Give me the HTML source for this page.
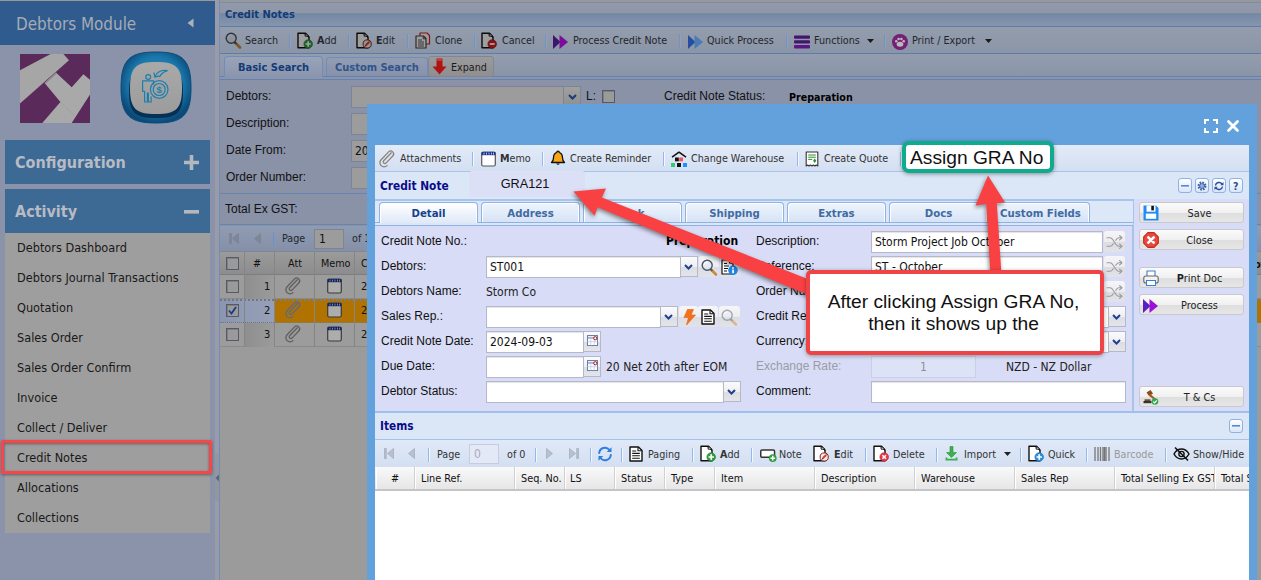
<!DOCTYPE html>
<html lang="en">
<head>
<meta charset="utf-8">
<title>Credit Notes - Assign GRA No</title>
<style>
*{box-sizing:border-box;margin:0;padding:0}
html,body{width:1261px;height:580px;overflow:hidden}
body{position:relative;background:#8b93aa;font-family:"DejaVu Sans Condensed","Liberation Sans",sans-serif;font-size:10.7px;color:#111}
.a{position:absolute}
.t{position:absolute;white-space:nowrap;line-height:14px}
.ar{font-family:"Liberation Sans",sans-serif;font-size:12px}
.b{font-weight:bold}
svg{position:absolute;overflow:visible}
/* ---------- background (masked) ---------- */
#side{left:0;top:0;width:215px;height:580px;background:#8b93aa}
#shead{left:0;top:1px;width:215px;height:44px;background:#2f5b8f}
#shead .t{left:16px;top:12px;font-size:16.9px;line-height:22px;color:#a7abb3}
.acc{left:5px;width:205px;height:44px;background:#3d6a95}
.acc .t{left:10px;top:12px;font-size:16px;line-height:22px;font-weight:bold;color:#b7bbc3}
#menu{left:5px;top:233px;width:205px;height:300px;background:#9e9e9e}
#menu .t{left:12px;font-size:12.6px;line-height:16px;color:#191919;font-family:"DejaVu Sans Condensed","Liberation Sans",sans-serif}
#split{left:215px;top:0;width:5px;height:580px;background:#999ba6}
#main{left:219px;top:0;width:1042px;height:580px;background:#8a92a8;border-left:1px solid #6f8db8}
.sep{position:absolute;width:1px;height:14px;background:#6f95c8;top:34px;box-shadow:1px 0 0 #949fb6}
.sep2{position:absolute;width:1px;height:14px;background:#93b8ee;box-shadow:1px 0 0 #f4f8fe}
.inp{position:absolute;background:#9c9c9c;border:1px solid #7d8494;height:22px}
/* ---------- dialog ---------- */
#dlg{left:367px;top:104px;width:890px;height:480px;background:#62a1dc}
#dbody{left:8px;top:41px;width:874px;height:440px;background:#dce6f6}
.dinp{position:absolute;background:#fff;border:1px solid #b5b8c8;height:22px;font-size:12px;line-height:21px;padding-left:3px;box-shadow:inset 0 1px 1px #e4e4e4}
.trg{position:absolute;width:17px;height:21px;border:1px solid #b5b8c8;border-left:0;background:linear-gradient(#fbfbfc 0,#efeff2 50%,#dcdde2 52%,#e4e5ea 100%)}
.tab{position:absolute;top:98px;height:20px;width:99px;border:1px solid #8db2e3;border-bottom:0;border-radius:4px 4px 0 0;background:linear-gradient(#eef4fd,#d6e3f6);box-shadow:inset 1px 1px 0 #fff,inset -1px 0 0 #fff;text-align:center;font-weight:bold;font-size:11.3px;line-height:22px;color:#416aa3}
.tab.on{background:linear-gradient(#ffffff,#dfe9f8);color:#15428b;height:21px}
.btn{position:absolute;left:764px;width:105px;height:21px;border:1px solid #c8c9cf;border-radius:3px;background:linear-gradient(#fbfbfb 0,#f0f0f0 50%,#dedede 51%,#e6e6e6 100%);text-align:center;font-size:10.8px;line-height:21px;color:#222;padding-left:16px}
.tool{position:absolute;width:14px;height:14px;border:1px solid #8db2e3;border-radius:3px;background:linear-gradient(#fff,#d9e5f7)}
.hd{position:absolute;top:0;height:23px;margin-left:1px;border-right:1px solid #d0d0d0;border-left:1px solid #fff;font-size:10.8px;line-height:24px;padding-left:5px;color:#111;overflow:hidden;white-space:nowrap}
</style>
</head>
<body>
<!-- ================= SIDEBAR ================= -->
<div class="a" id="side">
  <div class="a" style="left:0;top:0;width:215px;height:1px;background:#9b9793"></div>
  <div class="a" id="shead"><span class="t">Debtors Module</span>
    <svg style="left:187px;top:17px" width="7" height="10" viewBox="0 0 7 10"><path d="M6.5 0.5 L0.5 5 L6.5 9.5Z" fill="#aeb2ba"/></svg>
  </div>
  <!-- logo -->
  <svg style="left:20px;top:54px" width="70" height="69" viewBox="0 0 70 69">
    <rect width="70" height="69" fill="#5a2a5a"/>
    <path d="M0 16.300 L30.600 0 L43.400 0 L49 6.200 L0 49.400Z" fill="#a6a6a6"/>
    <path d="M24.600 29.100 L35.900 18.500 L51.700 33.300 L63.400 20.300 L70 25.800 L70 40.400 L51.700 69 L22.300 69 L40.400 47.900Z" fill="#a9a9a9"/>
    <path d="M24.600 29.100 L35.900 18.500 L36.800 19.400 L25.600 30Z" fill="#8d8d8d"/>
    <path d="M40.400 47.900 L55 62" stroke="#9b9b9b" stroke-width=".600" fill="none"/>
  </svg>
  <!-- module icon -->
  <svg style="left:120px;top:51px" width="72" height="73" viewBox="0 0 72 73">
    <defs>
      <radialGradient id="mg" cx="50%" cy="45%" r="55%"><stop offset="0" stop-color="#2e93c6"/><stop offset=".7" stop-color="#1a76aa"/><stop offset="1" stop-color="#0a4a78"/></radialGradient>
      <linearGradient id="mi" x1="0" y1="0" x2="0" y2="1"><stop offset="0" stop-color="#a9a9a9"/><stop offset="1" stop-color="#9c9c9c"/></linearGradient>
    </defs>
    <path d="M36 1 C62 1 71 8 71 37 C71 65 62 72 36 72 C10 72 1 65 1 37 C1 8 10 1 36 1Z" fill="url(#mg)" stroke="#0a4c7c" stroke-width="1"/>
    <path d="M36 15 C57 15 63 20 63 41 C63 62 57 67 36 67 C15 67 9 62 9 41 C9 20 15 15 36 15Z" fill="#052b4e" opacity=".9"/>
    <path d="M36 11 C56 11 62 16 62 37 C62 58 56 63 36 63 C16 63 10 58 10 37 C10 16 16 11 36 11Z" fill="url(#mi)"/>
    <g fill="none" stroke="#1c7fae" stroke-width="1.200" stroke-linejoin="round">
      <circle cx="28.200" cy="26" r="2.400"/>
      <path d="M33.600 33.500 v-3.700 h-11 v10.500 h2 v10.700 h2.800 v-9 h1 v9 h2.800 v-5.500"/>
      <circle cx="39.200" cy="38.500" r="8.800"/>
      <circle cx="39.200" cy="38.500" r="6"/>
      <path d="M47.400 19.600 q-9-1.500-12.500 6 M34 21.500 l0.800 4.600 l4.400-1.200"/>
      <path d="M47.400 19.600 q-6 2-8 6.500"/>
    </g>
    <text x="39.200" y="42" font-size="9.500" font-family="Liberation Sans, sans-serif" font-weight="bold" text-anchor="middle" fill="#1c7fae">$</text>
  </svg>
  <div class="a acc" style="top:140px"><span class="t">Configuration</span>
    <svg style="left:179px;top:15px" width="15" height="15" viewBox="0 0 15 15"><path d="M5.700 0h3.600v5.700h5.700v3.600H9.300v5.700H5.700V9.300H0V5.700h5.700z" fill="#b3b7bf"/></svg>
  </div>
  <div class="a acc" style="top:189px"><span class="t">Activity</span>
    <svg style="left:179px;top:21px" width="15" height="4" viewBox="0 0 15 4"><rect width="15" height="3.600" fill="#b3b7bf"/></svg>
  </div>
  <div class="a" id="menu">
    <span class="t" style="top:7px">Debtors Dashboard</span>
    <span class="t" style="top:37px">Debtors Journal Transactions</span>
    <span class="t" style="top:67px">Quotation</span>
    <span class="t" style="top:97px">Sales Order</span>
    <span class="t" style="top:127px">Sales Order Confirm</span>
    <span class="t" style="top:157px">Invoice</span>
    <span class="t" style="top:187px">Collect / Deliver</span>
    <span class="t" style="top:217px">Credit Notes</span>
    <span class="t" style="top:247px">Allocations</span>
    <span class="t" style="top:277px">Collections</span>
  </div>
  <!-- red highlight -->
  <div class="a" style="left:1px;top:440px;width:211px;height:34px;border:3px solid #f4474a;border-radius:2px;box-shadow:0 1px 3px rgba(0,0,0,.4),inset 0 1px 3px rgba(0,0,0,.4)"></div>
</div>
<div class="a" id="split">
  <div class="a" style="left:0;top:454px;width:5px;height:47px;background:#93959f"></div><svg style="left:0;top:474px" width="5" height="8" viewBox="0 0 5 8"><path d="M4.500 0 L0.500 4 L4.500 8Z" fill="#5f6675"/></svg>
</div>

<!-- ================= MAIN PANEL (masked) ================= -->
<div class="a" id="main">
  <!-- title bar -->
  <div class="a" style="left:0;top:0;width:1042px;height:2px;background:linear-gradient(#9b9793,#9198a6)"></div>
  <div class="a" style="left:0;top:2px;width:1042px;height:25px;background:linear-gradient(#9299a9 0,#8e97a8 44%,#74899f 46%,#7589a5 50%,#8696ad 100%);border-top:1px solid #7c8ba6;border-bottom:1px solid #607da9"></div>
  <span class="t b" style="left:5px;top:8px;font-size:11px;color:#123b78">Credit Notes</span>
  <!-- toolbar -->
  <div class="a" style="left:0;top:27px;width:1042px;height:27px;background:linear-gradient(#949dad,#8a95a7);border-bottom:1px solid #5f7ba8"></div>
  <svg style="left:5px;top:32px;filter:brightness(.62);" width="17" height="17" viewBox="0 0 17 17"><path d="M10 10.500l5 5" stroke="#c98a3c" stroke-width="2.600" stroke-linecap="round"/><path d="M9.300 9.800l2 2" stroke="#555" stroke-width="1.800"/><circle cx="6.200" cy="6.200" r="5" fill="#dfe9f5" fill-opacity=".7" stroke="#4a5566" stroke-width="1.400"/><path d="M3.300 5.500a3.200 3.200 0 0 1 3-2.300" fill="none" stroke="#fff" stroke-width="1.200" stroke-linecap="round"/></svg>
  <span class="t" style="left:25px;top:34px;color:#23262d;">Search</span>
  <div class="sep" style="left:69px"></div>
  <svg style="left:77px;top:32px;filter:brightness(.62);" width="16" height="17" viewBox="0 0 16 17"><path d="M1 1.200h7.500l3.500 3.800v10.800H1z" fill="#fff" stroke="#111" stroke-width="1.400" stroke-linejoin="round"/><path d="M8 1.800c2.200 0.300 3.500 1.500 3.700 3.600c-1-1.200-2.300-1.500-3.500-1.200z" fill="#fff" stroke="#111" stroke-width="1"/><circle cx="11.200" cy="12" r="4.300" fill="#2e9e3f" stroke="#1f7a2d" stroke-width=".600"/><path d="M11.200 9.300v5.400M8.500 12h5.400" stroke="#fff" stroke-width="1.700"/></svg>
  <span class="t" style="left:97px;top:34px;color:#23262d;"><b>A</b>dd</span>
  <div class="sep" style="left:128px"></div>
  <svg style="left:136px;top:32px;filter:brightness(.62);" width="16" height="17" viewBox="0 0 16 17"><path d="M1 1.200h7.500l3.500 3.800v10.800H1z" fill="#fff" stroke="#111" stroke-width="1.400" stroke-linejoin="round"/><path d="M8 1.800c2.200 0.300 3.500 1.500 3.700 3.600c-1-1.200-2.300-1.500-3.500-1.200z" fill="#fff" stroke="#111" stroke-width="1"/><circle cx="11.200" cy="12" r="4.100" fill="#f4ecec" stroke="#7a2a2a" stroke-width="1"/><path d="M8.800 14.400l1-2.600 3.400-3 1.300 1.400-3.300 3.100z" fill="#e23b2e"/><path d="M8.800 14.400l0.500-1.500 1 1z" fill="#333"/><path d="M12.500 9.400l1.300 1.300" stroke="#f5c242" stroke-width="1"/></svg>
  <span class="t" style="left:156px;top:34px;color:#23262d;"><b>E</b>dit</span>
  <div class="sep" style="left:187px"></div>
  <svg style="left:195px;top:32px;filter:brightness(.62);" width="16" height="17" viewBox="0 0 16 17"><path d="M5 1h7l2.500 2.500V12H5z" fill="#fff" stroke="#d0242c" stroke-width="1.200" stroke-linejoin="round"/><path d="M1 4h7.500l2.500 2.500V16H1z" fill="#fff" stroke="#444" stroke-width="1.200" stroke-linejoin="round"/><path d="M8.200 4.200v2.600h2.600" fill="none" stroke="#444" stroke-width="1"/><path d="M3 8h4M3 10h6M3 12h6M3 14h6" stroke="#555" stroke-width="1"/></svg>
  <span class="t" style="left:215px;top:34px;color:#23262d;">Clone</span>
  <div class="sep" style="left:254px"></div>
  <svg style="left:261px;top:32px;filter:brightness(.62);" width="16" height="17" viewBox="0 0 16 17"><path d="M1 1.200h7.500l3.500 3.800v10.800H1z" fill="#fff" stroke="#111" stroke-width="1.400" stroke-linejoin="round"/><path d="M8 1.800c2.200 0.300 3.500 1.500 3.700 3.600c-1-1.200-2.300-1.500-3.500-1.200z" fill="#fff" stroke="#111" stroke-width="1"/><circle cx="11.200" cy="12" r="4.300" fill="#d81e1e" stroke="#a01010" stroke-width=".600"/><path d="M8.700 12h5" stroke="#fff" stroke-width="1.800"/></svg>
  <span class="t" style="left:282px;top:34px;color:#23262d;">Cancel</span>
  <div class="sep" style="left:325px"></div>
  <svg style="left:333px;top:34px;filter:brightness(.8);" width="15" height="16" viewBox="0 0 15 16"><path d="M0 1l7.500 7L0 15z" fill="#4a1a8a"/><path d="M6.500 1l8.500 7-8.500 7z" fill="#9b10c0"/></svg>
  <span class="t" style="left:353px;top:34px;color:#23262d;">Process Credit Note</span>
  <div class="sep" style="left:459px"></div>
  <svg style="left:468px;top:34px;filter:brightness(.8);" width="15" height="16" viewBox="0 0 15 16"><path d="M0 1l7.500 7L0 15z" fill="#2f62c8"/><path d="M6.500 1l8.500 7-8.500 7z" fill="#5b9be0"/></svg>
  <span class="t" style="left:487px;top:34px;color:#23262d;">Quick Process</span>
  <div class="sep" style="left:566px"></div>
  <svg style="left:574px;top:34px;filter:brightness(.85);" width="16" height="16" viewBox="0 0 16 16"><rect x="0" y="1.500" width="16" height="3.300" rx="1" fill="#4f1a80"/><rect x="0" y="6.300" width="16" height="3.300" rx="1" fill="#4f1a80"/><rect x="0" y="11.100" width="16" height="3.300" rx="1" fill="#6a1b9a"/></svg>
  <span class="t" style="left:594px;top:34px;color:#23262d;">Functions</span>
  <svg style="left:647px;top:39px;" width="7" height="4" viewBox="0 0 7 4"><path d="M0 0h7L3.500 4z" fill="#1a1a1a"/></svg>
  <div class="sep" style="left:664px"></div>
  <svg style="left:672px;top:34px;filter:brightness(.8);" width="16" height="16" viewBox="0 0 16 16"><circle cx="8" cy="8" r="8" fill="#8e2a8e"/><ellipse cx="8" cy="10.300" rx="3.300" ry="2.500" fill="#f0e6f0"/><circle cx="4.300" cy="7.300" r="1.300" fill="#f0e6f0"/><circle cx="6.600" cy="5" r="1.300" fill="#f0e6f0"/><circle cx="9.400" cy="5" r="1.300" fill="#f0e6f0"/><circle cx="11.700" cy="7.300" r="1.300" fill="#f0e6f0"/></svg>
  <span class="t" style="left:692px;top:34px;color:#23262d;">Print / Export</span>
  <svg style="left:765px;top:39px;" width="7" height="4" viewBox="0 0 7 4"><path d="M0 0h7L3.500 4z" fill="#1a1a1a"/></svg>
  <!-- tab strip -->
  <div class="a" style="left:0;top:54px;width:1042px;height:23px;background:linear-gradient(#939dae,#8994a8)"></div>
  <div class="a" style="left:0;top:76px;width:1042px;height:4px;background:#8a95ad;border-top:1px solid #6581ad;border-bottom:1px solid #6581ad"></div>
  <div class="a" style="left:4px;top:56px;width:99px;height:21px;border:1px solid #6f8db8;border-bottom:0;border-radius:4px 4px 0 0;background:linear-gradient(#9aa3b7,#8a95ad)"></div>
  <span class="t b" style="left:18px;top:61px;font-size:11px;color:#123b78">Basic Search</span>
  <div class="a" style="left:106px;top:57px;width:102px;height:19px;border:1px solid #6f8db8;border-bottom:0;border-radius:4px 4px 0 0;background:linear-gradient(#929cb2,#8791aa)"></div>
  <span class="t b" style="left:115px;top:61px;font-size:11px;color:#2f558c">Custom Search</span>
  <div class="a" style="left:208px;top:56px;width:66px;height:21px;border:1px solid #82868f;border-radius:3px;background:linear-gradient(#9b9b9d,#8f8f92)"></div>
  <svg style="left:212px;top:58px" width="15" height="17" viewBox="0 0 15 17"><path d="M4.500 0.500h6v8h4L7.500 16.500 0.500 8.500h4z" fill="#b01313"/><path d="M5 1h5v2H5z" fill="#c83a32"/></svg>
  <span class="t" style="left:231px;top:61px;color:#1b1b1b">Expand</span>
  <!-- search form -->
  <div class="a" style="left:0;top:80px;width:1042px;height:114px;background:#8a92a8;border-bottom:1px solid #6885b0"></div>
  <span class="t ar" style="left:6px;top:89px">Debtors:</span>
  <span class="t ar" style="left:6px;top:116px">Description:</span>
  <span class="t ar" style="left:6px;top:143px">Date From:</span>
  <span class="t ar" style="left:6px;top:170px">Order Number:</span>
  <div class="inp" style="left:131px;top:86px;width:213px"></div>
  <div class="a" style="left:344px;top:86px;width:17px;height:22px;border:1px solid #7d8494;border-left:0;background:linear-gradient(#a0a0a0,#8e8e90)"></div>
  <svg style="left:348px;top:94px" width="9" height="6" viewBox="0 0 9 6"><path d="M1 1 L4.500 4.500 L8 1" fill="none" stroke="#1a3a7a" stroke-width="2"/></svg>
  <span class="t ar" style="left:366px;top:89px">L:</span>
  <div class="a" style="left:382px;top:90px;width:13px;height:13px;border:1px solid #555b66;background:#9a9a9a;box-shadow:inset 1px 1px 0 #7f8083"></div>
  <span class="t ar" style="left:444px;top:89px">Credit Note Status:</span>
  <span class="t b" style="left:569px;top:90px;font-size:10.600px;color:#000">Preparation</span>
  <div class="inp" style="left:131px;top:113px;width:230px"></div>
  <div class="inp" style="left:131px;top:140px;width:100px;font-size:12px;line-height:20px;padding-left:3px">2024</div>
  <div class="inp" style="left:131px;top:167px;width:230px"></div>
  <!-- total strip -->
  <div class="a" style="left:0;top:194px;width:1042px;height:31px;background:#8a92a8;border-bottom:1px solid #6885b0"></div>
  <span class="t ar" style="left:5px;top:202px">Total Ex GST:</span>
  <!-- grid -->
  <div class="a" style="left:0;top:226px;width:1042px;height:26px;background:linear-gradient(#909cb2,#8590a8);border-bottom:1px solid #7e8796"></div>
  <svg style="left:9px;top:233px" width="10" height="11" viewBox="0 0 10 11"><path d="M0.500 0.500h2v10h-2z M9.500 0.500v10L3.500 5.500z" fill="#7f8797" stroke="#747c8c" stroke-width=".5"/></svg>
  <svg style="left:34px;top:233px" width="7" height="11" viewBox="0 0 7 11"><path d="M6.500 0.500v10L0.500 5.500z" fill="#7f8797" stroke="#747c8c" stroke-width=".5"/></svg>
  <div class="a" style="left:53px;top:232px;width:1px;height:14px;background:#6592d0"></div>
  <span class="t" style="left:62px;top:232px;color:#23272f">Page</span>
  <div class="inp" style="left:94px;top:229px;width:30px;height:20px;font-size:12px;line-height:18px;padding-left:4px;color:#111">1</div>
  <span class="t" style="left:132px;top:232px;color:#23272f">of 1</span>
  <!-- header row -->
  <div class="a" style="left:0;top:252px;width:1042px;height:23px;background:linear-gradient(#9b9b9b,#8c8c8e);border-bottom:1px solid #7e7e80"></div>
  <!-- rows -->
  <div class="a" style="left:0;top:275px;width:1042px;height:24px;background:#9c9c9c;border-bottom:1px solid #8a8a8a"></div>
  <div class="a" style="left:0;top:299px;width:1042px;height:24px;background:#b07200;border-top:2px dotted #7d7d7d;border-bottom:1px dotted #7d7d7d"></div>
  <div class="a" style="left:0;top:299px;width:54px;height:24px;background:linear-gradient(90deg,#8a96b0,#96a0b8);border-top:2px dotted #70757f;border-bottom:1px dotted #70757f"></div>
  <div class="a" style="left:0;top:323px;width:1042px;height:24px;background:#9c9c9c;border-bottom:1px solid #8a8a8a"></div>
  <div class="a" style="left:24px;top:275px;width:30px;height:24px;background:linear-gradient(90deg,#8e8e8e,#9b9b9b)"></div>
  <div class="a" style="left:24px;top:323px;width:30px;height:24px;background:linear-gradient(90deg,#8e8e8e,#9b9b9b)"></div>
  <div class="a" style="left:0;top:347px;width:1042px;height:234px;background:#9b9b9b"></div>
  <!-- column lines -->
  <div class="a" style="left:24px;top:252px;width:1px;height:95px;background:#858585"></div>
  <div class="a" style="left:54px;top:252px;width:1px;height:95px;background:#858585"></div>
  <div class="a" style="left:94px;top:252px;width:1px;height:95px;background:#858585"></div>
  <div class="a" style="left:134px;top:252px;width:1px;height:95px;background:#858585"></div>
  <span class="t" style="left:33px;top:257px">#</span>
  <span class="t" style="left:68px;top:257px">Att</span>
  <span class="t" style="left:101px;top:257px">Memo</span>
  <span class="t" style="left:141px;top:257px">C</span>
  <span class="t" style="left:44px;top:280px;font-size:11px">1</span>
  <span class="t" style="left:44px;top:304px;font-size:11px">2</span>
  <span class="t" style="left:44px;top:328px;font-size:11px">3</span>
  <span class="t" style="left:141px;top:280px;font-size:11px">2</span>
  <span class="t" style="left:141px;top:304px;font-size:11px">2</span>
  <span class="t" style="left:141px;top:328px;font-size:11px">2</span>
  <span class="t b" style="left:1034px;top:258px;font-size:11px">ot</span>
  <div class="a" style="left:6px;top:257px;width:13px;height:13px;border:1px solid #555b66;background:#9a9a9a;box-shadow:inset 1px 1px 0 #7f8083"></div>
  <div class="a" style="left:6px;top:280px;width:13px;height:13px;border:1px solid #555b66;background:#9a9a9a;box-shadow:inset 1px 1px 0 #7f8083"></div>
  <svg style="left:66px;top:278px;" width="17" height="17" viewBox="0 0 17 17"><path d="M13.200 3.200L5.300 11.400a1.700 1.700 0 0 0 2.400 2.400l7-7.300a3 3 0 0 0-4.300-4.200L2.700 10.300a4.300 4.300 0 0 0 6.100 6.100" fill="none" stroke="#5e5e5e" stroke-width="1.300" stroke-linecap="round" transform="translate(-1.500,-1.300) scale(.97)"/></svg>
  <svg style="left:107px;top:278px;filter:brightness(.68);" width="15" height="16" viewBox="0 0 15 16"><rect x="0.700" y="1" width="13.600" height="14" rx="1.500" fill="#fff" stroke="#555" stroke-width="1.200"/><path d="M0.700 1h13.600v3.200H0.700z" fill="#16348f"/><path d="M3 1.600v2M5.500 1.600v2M8 1.600v2M10.500 1.600v2M12.500 1.600v2" stroke="#dfe6ff" stroke-width=".800"/></svg>
  <div class="a" style="left:6px;top:304px;width:13px;height:13px;border:1px solid #555b66;background:#9a9a9a;box-shadow:inset 1px 1px 0 #7f8083"></div><svg style="left:8px;top:306px;" width="9" height="9" viewBox="0 0 9 9"><path d="M1 4.500l2.500 3L8 1" fill="none" stroke="#1a3a8a" stroke-width="1.800"/></svg>
  <svg style="left:66px;top:302px;" width="17" height="17" viewBox="0 0 17 17"><path d="M13.200 3.200L5.300 11.400a1.700 1.700 0 0 0 2.400 2.400l7-7.300a3 3 0 0 0-4.300-4.200L2.700 10.300a4.300 4.300 0 0 0 6.100 6.100" fill="none" stroke="#5a6a8a" stroke-width="1.300" stroke-linecap="round" transform="translate(-1.500,-1.300) scale(.97)"/></svg>
  <svg style="left:107px;top:302px;filter:brightness(.68);" width="15" height="16" viewBox="0 0 15 16"><rect x="0.700" y="1" width="13.600" height="14" rx="1.500" fill="#fff" stroke="#555" stroke-width="1.200"/><path d="M0.700 1h13.600v3.200H0.700z" fill="#16348f"/><path d="M3 1.600v2M5.500 1.600v2M8 1.600v2M10.500 1.600v2M12.500 1.600v2" stroke="#dfe6ff" stroke-width=".800"/></svg>
  <div class="a" style="left:6px;top:328px;width:13px;height:13px;border:1px solid #555b66;background:#9a9a9a;box-shadow:inset 1px 1px 0 #7f8083"></div>
  <svg style="left:66px;top:326px;" width="17" height="17" viewBox="0 0 17 17"><path d="M13.200 3.200L5.300 11.400a1.700 1.700 0 0 0 2.400 2.400l7-7.300a3 3 0 0 0-4.300-4.200L2.700 10.300a4.300 4.300 0 0 0 6.100 6.100" fill="none" stroke="#5e5e5e" stroke-width="1.300" stroke-linecap="round" transform="translate(-1.500,-1.300) scale(.97)"/></svg>
  <svg style="left:107px;top:326px;filter:brightness(.68);" width="15" height="16" viewBox="0 0 15 16"><rect x="0.700" y="1" width="13.600" height="14" rx="1.500" fill="#fff" stroke="#555" stroke-width="1.200"/><path d="M0.700 1h13.600v3.200H0.700z" fill="#16348f"/><path d="M3 1.600v2M5.500 1.600v2M8 1.600v2M10.500 1.600v2M12.500 1.600v2" stroke="#dfe6ff" stroke-width=".800"/></svg>
</div>

<div class="a" id="dlg">
<svg style="left:837px;top:15px;" width="14" height="14" viewBox="0 0 14 14"><path d="M1 5V1h4M9 1h4v4M13 9v4H9M5 13H1V9" fill="none" stroke="#fff" stroke-width="2"/></svg>
<svg style="left:860px;top:16px;" width="12" height="12" viewBox="0 0 12 12"><path d="M1.500 1.500l9 9M10.500 1.500l-9 9" stroke="#fff" stroke-width="2.800" stroke-linecap="round"/></svg>
<div class="a" id="dbody">
<div class="a" style="left:0;top:0;width:874px;height:27px;background:linear-gradient(#e3ebf8,#d3dff2);border-bottom:1px solid #a9c4ea"></div>
<svg style="left:5px;top:6px;" width="17" height="17" viewBox="0 0 17 17"><path d="M13.200 3.200L5.300 11.400a1.700 1.700 0 0 0 2.400 2.400l7-7.300a3 3 0 0 0-4.300-4.200L2.700 10.300a4.300 4.300 0 0 0 6.100 6.100" fill="none" stroke="#8a8378" stroke-width="1.300" stroke-linecap="round" transform="translate(-1.500,-1.300) scale(.97)"/></svg>
<span class="t" style="left:25px;top:7px;color:#333;">Attachments</span>
<div class="sep2" style="left:97px;top:7px"></div>
<svg style="left:106px;top:6px;" width="15" height="16" viewBox="0 0 15 16"><rect x="0.700" y="1" width="13.600" height="14" rx="1.500" fill="#fff" stroke="#555" stroke-width="1.200"/><path d="M0.700 1h13.600v3.200H0.700z" fill="#16348f"/><path d="M3 1.600v2M5.500 1.600v2M8 1.600v2M10.500 1.600v2M12.500 1.600v2" stroke="#dfe6ff" stroke-width=".800"/></svg>
<span class="t" style="left:125px;top:7px;color:#333;"><b>M</b>emo</span>
<div class="sep2" style="left:167px;top:7px"></div>
<svg style="left:175px;top:5px;" width="16" height="17" viewBox="0 0 16 17"><path d="M8 1.200c.8 0 1.300.6 1.300 1.300 2.200.8 3.200 2.700 3.200 5.200 0 2.600.9 3.800 2 4.800H1.500c1.100-1 2-2.200 2-4.800 0-2.500 1-4.400 3.200-5.200C6.700 1.800 7.200 1.200 8 1.200z" fill="#f9a51a" stroke="#111" stroke-width="1.300" stroke-linejoin="round"/><path d="M6.300 13.500a1.800 1.800 0 0 0 3.400 0z" fill="#111"/></svg>
<span class="t" style="left:195px;top:7px;color:#333;">Create Reminder</span>
<div class="sep2" style="left:288px;top:7px"></div>
<svg style="left:296px;top:6px;" width="16" height="16" viewBox="0 0 16 16"><path d="M1 6.200L8 1.200l7 5" fill="none" stroke="#111" stroke-width="1.500" stroke-linejoin="round"/><rect x="4" y="6.500" width="3.800" height="3.800" fill="#111"/><rect x="8.200" y="6.500" width="3.800" height="3.800" fill="#f0555f"/><rect x="0" y="12" width="4" height="4" fill="#2ecc71"/><rect x="6" y="12" width="4" height="4" fill="#111"/><rect x="12" y="12" width="4" height="4" fill="#1e90ff"/></svg>
<span class="t" style="left:316px;top:7px;color:#333;">Change Warehouse</span>
<div class="sep2" style="left:422px;top:7px"></div>
<svg style="left:430px;top:6px;" width="14" height="16" viewBox="0 0 14 16"><path d="M1.200 1h11.600v14l-1.500-1-1.400 1-1.500-1-1.400 1-1.500-1-1.400 1-1.500-1-1.400 1z" fill="#fff" stroke="#333" stroke-width="1.100" stroke-linejoin="round"/><path d="M3.200 4h7.600M3.200 6.200h7.600M3.200 8.400h4" stroke="#2e8b2e" stroke-width="1"/><path d="M9.700 7.500l1.600 2.200-1.600 2.200-1.600-2.200z" fill="#2e8b2e"/></svg>
<span class="t" style="left:449px;top:7px;color:#333;">Create Quote</span>
<div class="sep2" style="left:525px;top:7px"></div>
<div class="a" style="left:0;top:27px;width:874px;height:29px;background:#dbe6f7;border-bottom:2px solid #a6c5ee"></div>
<span class="t b" style="left:5px;top:34px;font-size:11.800px;color:#0b0b8a">Credit Note</span>
<div class="tool" style="left:803px;top:33px;height:15px"></div>
<svg style="left:806px;top:40px;" width="8" height="2" viewBox="0 0 8 2"><rect width="8" height="1.600" fill="#5588d8"/></svg>
<div class="tool" style="left:820px;top:33px;height:15px"></div>
<svg style="left:822px;top:36px;" width="10" height="10" viewBox="0 0 10 10"><circle cx="5" cy="5" r="3.200" fill="none" stroke="#3a5fa8" stroke-width="2.600" stroke-dasharray="1.500 1"/><circle cx="5" cy="5" r="2.400" fill="#8fb0e0" stroke="#3a5fa8" stroke-width=".800"/></svg>
<div class="tool" style="left:837px;top:33px;height:15px"></div>
<svg style="left:839px;top:36px;" width="10" height="10" viewBox="0 0 10 10"><path d="M1.500 4.500A3.500 3.500 0 0 1 8 3.200M8.500 5.500A3.500 3.500 0 0 1 2 6.800" fill="none" stroke="#2a4f98" stroke-width="1.400"/><path d="M9.500 1v3.300H6.200zM.5 9V5.700h3.300z" fill="#2a4f98"/></svg>
<div class="tool" style="left:854px;top:33px;height:15px"></div>
<span class="t b" style="left:858px;top:34px;font-size:10.500px;color:#2a4f98;line-height:14px">?</span>
<div class="a" style="left:94px;top:26px;width:116px;height:26px;background:#dbe0f6;border-radius:3px;text-align:center;padding-right:4px;font:12.700px/27px 'Liberation Sans',sans-serif;color:#111">GRA121</div>
<div class="a" style="left:0;top:56px;width:758px;height:24px;background:#dce7f8"></div>
<div class="a" style="left:0;top:77px;width:758px;height:4px;background:#dbe6f7;border-top:1px solid #8db2e3;border-bottom:1px solid #8db2e3"></div>
<div class="tab on" style="left:4px;top:57px">Detail</div>
<div class="tab" style="left:106px;top:57px">Address</div>
<div class="tab" style="left:208px;top:57px">Link</div>
<div class="tab" style="left:310px;top:57px">Shipping</div>
<div class="tab" style="left:412px;top:57px">Extras</div>
<div class="tab" style="left:514px;top:57px">Docs</div>
<div class="tab" style="left:616px;top:57px">Custom Fields</div>
<div class="a" style="left:0;top:81px;width:758px;height:186px;background:#d8dcf6;border-right:1px solid #a9c4ea"></div>
<div class="a" style="left:758px;top:54px;width:116px;height:213px;background:#d8dcf6;border-left:1px solid #a9c4ea"></div>
<span class="t ar" style="left:6px;top:89px;">Credit Note No.:</span>
<span class="t ar" style="left:6px;top:114px;">Debtors:</span>
<span class="t ar" style="left:6px;top:139px;">Debtors Name:</span>
<span class="t ar" style="left:6px;top:164px;">Sales Rep.:</span>
<span class="t ar" style="left:6px;top:189px;">Credit Note Date:</span>
<span class="t ar" style="left:6px;top:214px;">Due Date:</span>
<span class="t ar" style="left:6px;top:239px;">Debtor Status:</span>
<span class="t ar" style="left:381px;top:89px;">Description:</span>
<span class="t ar" style="left:381px;top:114px;">Reference:</span>
<span class="t ar" style="left:381px;top:139px;">Order Number:</span>
<span class="t ar" style="left:381px;top:164px;">Credit Reason:</span>
<span class="t ar" style="left:381px;top:189px;">Currency:</span>
<span class="t ar" style="left:381px;top:214px;color:#9a9ca8;">Exchange Rate:</span>
<span class="t ar" style="left:381px;top:239px;">Comment:</span>
<span class="t b" style="left:291px;top:89px;font-size:12px;color:#000">Preparation</span>
<div class="dinp" style="left:111px;top:111px;width:195px;">ST001</div>
<div class="trg" style="left:306px;top:111px"></div>
<svg style="left:309px;top:119px;" width="9" height="6" viewBox="0 0 9 6"><path d="M1 1 L4.500 4.500 L8 1" fill="none" stroke="#1f3f8f" stroke-width="2"/></svg>
<div class="a" style="left:324px;top:111px;width:20px;height:21px;border-radius:3px;background:linear-gradient(#f6f6f8 0,#ededf0 50%,#dcdde2 52%,#e2e3e8 100%)"></div>
<svg style="left:325.5px;top:113.5px;" width="17" height="17" viewBox="0 0 17 17"><path d="M10 10.500l5 5" stroke="#c98a3c" stroke-width="2.600" stroke-linecap="round"/><path d="M9.300 9.800l2 2" stroke="#555" stroke-width="1.800"/><circle cx="6.200" cy="6.200" r="5" fill="#dfe9f5" fill-opacity=".7" stroke="#4a5566" stroke-width="1.400"/><path d="M3.300 5.500a3.200 3.200 0 0 1 3-2.300" fill="none" stroke="#fff" stroke-width="1.200" stroke-linecap="round"/></svg>
<div class="a" style="left:344.5px;top:111px;width:21px;height:21px;border-radius:3px;background:linear-gradient(#f6f6f8 0,#ededf0 50%,#dcdde2 52%,#e2e3e8 100%)"></div>
<svg style="left:346px;top:114px;" width="17" height="16" viewBox="0 0 17 16"><path d="M1 1h8l3 3v11H1z" fill="#fff" stroke="#111" stroke-width="1.200" stroke-linejoin="round"/><path d="M3 4.500h3M3 7h5M3 9.500h4M3 12h3" stroke="#111" stroke-width="1.100"/><path d="M8.500 1.200v3h3" fill="none" stroke="#111" stroke-width="1"/><circle cx="12" cy="11.300" r="4.800" fill="#1e86ea"/><rect x="11.200" y="10.600" width="1.700" height="3.600" fill="#fff"/><circle cx="12" cy="8.900" r="1" fill="#fff"/></svg>
<span class="t" style="left:111px;top:140px;font-size:12px;color:#222">Storm Co</span>
<div class="dinp" style="left:111px;top:161px;width:175px;"></div>
<div class="trg" style="left:286px;top:161px"></div>
<svg style="left:289px;top:169px;" width="9" height="6" viewBox="0 0 9 6"><path d="M1 1 L4.500 4.500 L8 1" fill="none" stroke="#1f3f8f" stroke-width="2"/></svg>
<div class="a" style="left:303.5px;top:161px;width:19px;height:21px;border-radius:3px;background:linear-gradient(#f6f6f8 0,#ededf0 50%,#dcdde2 52%,#e2e3e8 100%)"></div>
<svg style="left:307.5px;top:163.5px;" width="13" height="16" viewBox="0 0 13 16"><path d="M4.500 0.500h6L8 6h4.500L3.500 16l2-7.500H1z" fill="#f5701a" stroke="#e0600f" stroke-width=".600" stroke-linejoin="round"/></svg>
<div class="a" style="left:323px;top:161px;width:20px;height:21px;border-radius:3px;background:linear-gradient(#f6f6f8 0,#ededf0 50%,#dcdde2 52%,#e2e3e8 100%)"></div>
<svg style="left:325.5px;top:163.5px;" width="14" height="16" viewBox="0 0 14 16"><path d="M1 1h8.500L13 4.500V15H1z" fill="#fff" stroke="#111" stroke-width="1.400" stroke-linejoin="round"/><path d="M9 1.300v3.500h3.600" fill="none" stroke="#111" stroke-width="1.100"/><path d="M3.200 5h4M3.200 7.400h7.600M3.200 9.800h7.600M3.200 12.200h7.600" stroke="#111" stroke-width="1.100"/></svg>
<div class="a" style="left:344px;top:161px;width:21px;height:21px;border-radius:3px;background:linear-gradient(#f6f6f8 0,#ededf0 50%,#dcdde2 52%,#e2e3e8 100%)"></div>
<svg style="left:346px;top:163.5px;opacity:.45;" width="17" height="17" viewBox="0 0 17 17"><path d="M10 10.500l5 5" stroke="#c98a3c" stroke-width="2.600" stroke-linecap="round"/><path d="M9.300 9.800l2 2" stroke="#555" stroke-width="1.800"/><circle cx="6.200" cy="6.200" r="5" fill="#dfe9f5" fill-opacity=".7" stroke="#4a5566" stroke-width="1.400"/><path d="M3.300 5.500a3.200 3.200 0 0 1 3-2.300" fill="none" stroke="#fff" stroke-width="1.200" stroke-linecap="round"/></svg>
<div class="dinp" style="left:111px;top:186px;width:98px;">2024-09-03</div>
<div class="trg" style="left:209px;top:186px"></div>
<svg style="left:212px;top:190px;" width="11" height="11" viewBox="0 0 11 11"><rect x="0.500" y="0.500" width="10" height="10" fill="#fff" stroke="#6d7fa8" stroke-width="1"/><path d="M0.500 0.500h10v2.500H0.500z" fill="#e8eefb" stroke="#6d7fa8" stroke-width="1"/><path d="M3.800 3v7.500M7.200 3v7.500M0.500 6.700h10" stroke="#b9c4dd" stroke-width=".700"/><circle cx="8.300" cy="3.200" r="1.600" fill="#fff" stroke="#a01818" stroke-width="1"/></svg>
<div class="dinp" style="left:111px;top:211px;width:98px;"></div>
<div class="trg" style="left:209px;top:211px"></div>
<svg style="left:212px;top:215px;" width="11" height="11" viewBox="0 0 11 11"><rect x="0.500" y="0.500" width="10" height="10" fill="#fff" stroke="#6d7fa8" stroke-width="1"/><path d="M0.500 0.500h10v2.500H0.500z" fill="#e8eefb" stroke="#6d7fa8" stroke-width="1"/><path d="M3.800 3v7.500M7.200 3v7.500M0.500 6.700h10" stroke="#b9c4dd" stroke-width=".700"/><circle cx="8.300" cy="3.200" r="1.600" fill="#fff" stroke="#a01818" stroke-width="1"/></svg>
<span class="t" style="left:231px;top:215px;font-size:12px;color:#222">20 Net 20th after EOM</span>
<div class="dinp" style="left:111px;top:236px;width:238px;"></div>
<div class="trg" style="left:349px;top:236px"></div>
<svg style="left:352px;top:244px;" width="9" height="6" viewBox="0 0 9 6"><path d="M1 1 L4.500 4.500 L8 1" fill="none" stroke="#1f3f8f" stroke-width="2"/></svg>
<div class="dinp" style="left:496px;top:86px;width:232px;">Storm Project Job October</div>
<div class="a" style="left:728.5px;top:86px;width:21.5px;height:21px;border-radius:3px;background:linear-gradient(#f6f6f8 0,#ededf0 50%,#dcdde2 52%,#e2e3e8 100%)"></div>
<svg style="left:731px;top:89px;" width="17" height="16" viewBox="0 0 16 15"><g fill="none" stroke="#9a9a9a" stroke-width="1.100" stroke-linecap="round" stroke-linejoin="round"><path d="M1 3.500h3c3 0 4.500 8 8 8h2.500"/><path d="M1 11.500h3c1.200 0 2-1 2.800-2.300M9.200 5.800c.8-1.300 1.600-2.300 2.800-2.300h2.500"/><path d="M12.800 1.500l2.200 2-2.200 2M12.800 9.500l2.200 2-2.200 2"/></g></svg>
<div class="dinp" style="left:496px;top:111px;width:232px;">ST - October</div>
<div class="a" style="left:728.5px;top:111px;width:21.5px;height:21px;border-radius:3px;background:linear-gradient(#f6f6f8 0,#ededf0 50%,#dcdde2 52%,#e2e3e8 100%)"></div>
<svg style="left:731px;top:114px;" width="17" height="16" viewBox="0 0 16 15"><g fill="none" stroke="#9a9a9a" stroke-width="1.100" stroke-linecap="round" stroke-linejoin="round"><path d="M1 3.500h3c3 0 4.500 8 8 8h2.500"/><path d="M1 11.500h3c1.200 0 2-1 2.800-2.300M9.200 5.800c.8-1.300 1.600-2.300 2.800-2.300h2.500"/><path d="M12.800 1.500l2.200 2-2.200 2M12.800 9.500l2.200 2-2.200 2"/></g></svg>
<div class="dinp" style="left:496px;top:136px;width:232px;"></div>
<div class="a" style="left:728.5px;top:136px;width:21.5px;height:21px;border-radius:3px;background:linear-gradient(#f6f6f8 0,#ededf0 50%,#dcdde2 52%,#e2e3e8 100%)"></div>
<svg style="left:731px;top:139px;" width="17" height="16" viewBox="0 0 16 15"><g fill="none" stroke="#9a9a9a" stroke-width="1.100" stroke-linecap="round" stroke-linejoin="round"><path d="M1 3.500h3c3 0 4.500 8 8 8h2.500"/><path d="M1 11.500h3c1.200 0 2-1 2.800-2.300M9.200 5.800c.8-1.300 1.600-2.300 2.800-2.300h2.500"/><path d="M12.800 1.500l2.200 2-2.200 2M12.800 9.500l2.200 2-2.200 2"/></g></svg>
<div class="dinp" style="left:496px;top:161px;width:238px;"></div>
<div class="trg" style="left:734px;top:161px"></div>
<svg style="left:737px;top:169px;" width="9" height="6" viewBox="0 0 9 6"><path d="M1 1 L4.500 4.500 L8 1" fill="none" stroke="#1f3f8f" stroke-width="2"/></svg>
<div class="dinp" style="left:496px;top:186px;width:238px;"></div>
<div class="trg" style="left:734px;top:186px"></div>
<svg style="left:737px;top:194px;" width="9" height="6" viewBox="0 0 9 6"><path d="M1 1 L4.500 4.500 L8 1" fill="none" stroke="#1f3f8f" stroke-width="2"/></svg>
<div class="dinp" style="left:496px;top:211px;width:105px;background:#dde3f6;border-color:#c9cfe6;color:#8d8f99;text-align:center;box-shadow:none;padding:0">1</div>
<span class="t" style="left:631px;top:215px;font-size:12px;color:#222">NZD - NZ Dollar</span>
<div class="dinp" style="left:496px;top:236px;width:255px;"></div>
<div class="btn" style="top:57px">Save</div>
<svg style="left:767.5px;top:60px;" width="16" height="16" viewBox="0 0 16 16"><path d="M0.500 0.500h12.500l2.500 2.500v12.500h-15z" fill="#1e8cf5"/><rect x="3.500" y="0.500" width="9" height="6.200" fill="#fff"/><rect x="8.300" y="0.800" width="2.600" height="4.600" fill="#111"/><rect x="2.800" y="8.600" width="10.400" height="5.200" fill="#fff"/></svg>
<div class="btn" style="top:84px">Close</div>
<svg style="left:767.5px;top:87px;" width="16" height="16" viewBox="0 0 16 16"><path d="M5 0.700h6L15.300 5v6L11 15.300H5L0.700 11V5z" fill="#ea4a3e" stroke="#c8281e" stroke-width="1.200"/><path d="M5.300 5.300l5.400 5.400M10.700 5.300l-5.400 5.400" stroke="#fff" stroke-width="2.600" stroke-linecap="round"/></svg>
<div class="btn" style="top:122px"><b>P</b>rint Doc</div>
<svg style="left:767.5px;top:125px;" width="16" height="16" viewBox="0 0 16 16"><path d="M4 6V1h8l0 5" fill="#fff" stroke="#3b7fd0" stroke-width="1.100"/><rect x="0.800" y="6" width="14.400" height="7" rx="2" fill="#f2f2f2" stroke="#666" stroke-width="1.100"/><path d="M3.500 10.500h9v5h-9z" fill="#fff" stroke="#3b7fd0" stroke-width="1.100"/></svg>
<div class="btn" style="top:149px">Process</div>
<svg style="left:767.5px;top:152.5px;" width="15" height="16" viewBox="0 0 15 16"><path d="M0 1l7.500 7L0 15z" fill="#5a1fc0"/><path d="M6.500 1l8.500 7-8.500 7z" fill="#9b10d8"/></svg>
<div class="btn" style="top:241px">T &amp; Cs</div>
<svg style="left:767.5px;top:244px;" width="16" height="16" viewBox="0 0 16 16"><path d="M3.500 3.500l4-2.500 2.500 3.500-4 2.500z" fill="#8b4a1c"/><path d="M7.500 5l5.500 5-1 1.200-6-4.200z" fill="#a05a24"/><rect x="0.500" y="12" width="8" height="2.200" fill="#333"/><rect x="1.500" y="10.300" width="6" height="1.700" fill="#7a4a20"/><circle cx="12" cy="12.500" r="3.300" fill="#2fa84f"/><path d="M10.300 12.500l1.300 1.300 2.200-2.400" fill="none" stroke="#fff" stroke-width="1.200"/></svg>
<div class="a" style="left:0;top:266px;width:874px;height:30px;background:#dbe6f7;border-top:2px solid #9fc0ec;border-bottom:2px solid #a3c2ed"></div>
<span class="t b" style="left:5px;top:274px;font-size:11.800px;color:#0b0b8a">Items</span>
<div class="tool" style="left:854px;top:274px"></div>
<svg style="left:857px;top:280px;" width="8" height="2" viewBox="0 0 8 2"><rect width="8" height="1.600" fill="#5588d8"/></svg>
<div class="a" style="left:0;top:295px;width:874px;height:27px;background:linear-gradient(#e0e9f7,#d3dff2)"></div>
<svg style="left:9px;top:303px;" width="10" height="11" viewBox="0 0 10 11"><path d="M0.500 0.500h1.800v10H0.500z M9.500 0.500v10L3.500 5.500z" fill="#b9bfcc" stroke="#9aa2b3" stroke-width=".600"/></svg>
<svg style="left:33px;top:303px;" width="7" height="11" viewBox="0 0 7 11"><path d="M6.500 0.500v10L0.500 5.500z" fill="#b9bfcc" stroke="#9aa2b3" stroke-width=".600"/></svg>
<div class="sep2" style="left:53px;top:303px"></div>
<span class="t" style="left:62px;top:303px;color:#333;">Page</span>
<div class="a" style="left:94px;top:299px;width:30px;height:20px;border:1px solid #c5cde0;background:#e3e9f6;font-size:12px;line-height:18px;padding-left:4px;color:#aab">0</div>
<span class="t" style="left:132px;top:303px;color:#333;">of 0</span>
<div class="sep2" style="left:160px;top:303px"></div>
<svg style="left:171px;top:303px;" width="7" height="11" viewBox="0 0 7 11"><path d="M0.500 0.500v10L6.500 5.500z" fill="#b9bfcc" stroke="#9aa2b3" stroke-width=".600"/></svg>
<svg style="left:194px;top:303px;" width="10" height="11" viewBox="0 0 10 11"><path d="M7.700 0.500h1.800v10H7.700z M0.500 0.500v10L6.500 5.500z" fill="#b9bfcc" stroke="#9aa2b3" stroke-width=".600"/></svg>
<div class="sep2" style="left:215px;top:303px"></div>
<svg style="left:222px;top:301px;" width="16" height="16" viewBox="0 0 16 16"><g fill="none" stroke="#2b7fe0" stroke-width="2" stroke-linecap="round"><path d="M2.200 7A5.800 5.800 0 0 1 12.500 4"/><path d="M13.800 9A5.800 5.800 0 0 1 3.500 12"/></g><path d="M14.500 1.200v4.800h-4.800z" fill="#2b7fe0"/><path d="M1.500 14.800V10h4.800z" fill="#2b7fe0"/></svg>
<div class="sep2" style="left:246px;top:303px"></div>
<svg style="left:254px;top:301px;" width="14" height="16" viewBox="0 0 14 16"><path d="M1 1h8.500L13 4.500V15H1z" fill="#fff" stroke="#111" stroke-width="1.400" stroke-linejoin="round"/><path d="M9 1.300v3.500h3.600" fill="none" stroke="#111" stroke-width="1.100"/><path d="M3.200 5h4M3.200 7.400h7.600M3.200 9.800h7.600M3.200 12.200h7.600" stroke="#111" stroke-width="1.100"/></svg>
<span class="t" style="left:273px;top:303px;color:#333;">Paging</span>
<div class="sep2" style="left:317px;top:303px"></div>
<svg style="left:325px;top:300px;" width="16" height="17" viewBox="0 0 16 17"><path d="M1 1.200h7.500l3.500 3.800v10.800H1z" fill="#fff" stroke="#111" stroke-width="1.400" stroke-linejoin="round"/><path d="M8 1.800c2.200 0.300 3.500 1.500 3.700 3.600c-1-1.200-2.300-1.500-3.500-1.200z" fill="#fff" stroke="#111" stroke-width="1"/><circle cx="11.200" cy="12" r="4.300" fill="#2e9e3f" stroke="#1f7a2d" stroke-width=".600"/><path d="M11.200 9.300v5.400M8.500 12h5.400" stroke="#fff" stroke-width="1.700"/></svg>
<span class="t" style="left:345px;top:303px;color:#333;"><b>A</b>dd</span>
<div class="sep2" style="left:376px;top:303px"></div>
<svg style="left:385px;top:302px;" width="17" height="16" viewBox="0 0 16 15"><rect x="0.700" y="2.700" width="13" height="7" rx="1.200" fill="#fff" stroke="#333" stroke-width="1.400"/><circle cx="12" cy="10.500" r="3.600" fill="#2e9e3f"/><path d="M12 8.300v4.400M9.800 10.500h4.400" stroke="#fff" stroke-width="1.400"/></svg>
<span class="t" style="left:404px;top:303px;color:#333;">Note</span>
<svg style="left:438px;top:300px;" width="16" height="17" viewBox="0 0 16 17"><path d="M1 1.200h7.500l3.500 3.800v10.800H1z" fill="#fff" stroke="#111" stroke-width="1.400" stroke-linejoin="round"/><path d="M8 1.800c2.200 0.300 3.500 1.500 3.700 3.600c-1-1.200-2.300-1.500-3.500-1.200z" fill="#fff" stroke="#111" stroke-width="1"/><circle cx="11.200" cy="12" r="4.100" fill="#f4ecec" stroke="#7a2a2a" stroke-width="1"/><path d="M8.800 14.400l1-2.600 3.400-3 1.300 1.400-3.300 3.100z" fill="#e23b2e"/><path d="M8.800 14.400l0.500-1.500 1 1z" fill="#333"/><path d="M12.500 9.400l1.300 1.300" stroke="#f5c242" stroke-width="1"/></svg>
<span class="t" style="left:459px;top:303px;color:#333;"><b>E</b>dit</span>
<div class="sep2" style="left:490px;top:303px"></div>
<svg style="left:498px;top:300px;" width="16" height="17" viewBox="0 0 16 17"><path d="M1 1.200h7.500l3.500 3.800v10.800H1z" fill="#fff" stroke="#111" stroke-width="1.400" stroke-linejoin="round"/><path d="M8 1.800c2.200 0.300 3.500 1.500 3.700 3.600c-1-1.200-2.300-1.500-3.500-1.200z" fill="#fff" stroke="#111" stroke-width="1"/><circle cx="11.200" cy="12" r="4.300" fill="#e8384a" stroke="#b81c2c" stroke-width=".600"/><path d="M9.400 10.200l3.600 3.600M13 10.200l-3.600 3.600" stroke="#fff" stroke-width="1.500"/></svg>
<span class="t" style="left:518px;top:303px;color:#333;">Delete</span>
<div class="sep2" style="left:561px;top:303px"></div>
<svg style="left:570px;top:301px;" width="13" height="16" viewBox="0 0 13 16"><path d="M5 0.500h3v6h3.500L6.500 11.500 1.500 6.500H5z" fill="#3cb04a" stroke="#2a9038" stroke-width=".600"/><path d="M0.500 11.500v3h12v-3h-1.800v1.300H2.300v-1.300z" fill="#3cb04a"/></svg>
<span class="t" style="left:589px;top:303px;color:#333;">Import</span>
<svg style="left:629px;top:307px;" width="7" height="4" viewBox="0 0 7 4"><path d="M0 0h7L3.500 4z" fill="#222"/></svg>
<div class="sep2" style="left:645px;top:303px"></div>
<svg style="left:653px;top:300px;" width="16" height="17" viewBox="0 0 16 17"><path d="M1 1.200h7.500l3.500 3.800v10.800H1z" fill="#fff" stroke="#111" stroke-width="1.400" stroke-linejoin="round"/><path d="M8 1.800c2.200 0.300 3.500 1.500 3.700 3.600c-1-1.200-2.300-1.500-3.500-1.200z" fill="#fff" stroke="#111" stroke-width="1"/><circle cx="11.200" cy="12" r="4.300" fill="#2a8fe0" stroke="#1769b5" stroke-width=".600"/><path d="M11.200 9.300v5.400M8.500 12h5.400" stroke="#fff" stroke-width="1.700"/></svg>
<span class="t" style="left:673px;top:303px;color:#333;">Quick</span>
<div class="sep2" style="left:711px;top:303px"></div>
<svg style="left:719px;top:301px;" width="16" height="16" viewBox="0 0 16 16"><path d="M1 1v14M4 1v14M6.500 1v14M9 1v14M12 1v14M15 1v14" stroke="#777" stroke-width="1.300"/><path d="M10.500 1v14" stroke="#777" stroke-width="1.800"/></svg>
<span class="t" style="left:739px;top:303px;color:#9a9a9a">Barcode</span>
<div class="sep2" style="left:790px;top:303px"></div>
<svg style="left:798px;top:301px;" width="17" height="16" viewBox="0 0 17 16"><path d="M1 8c2-3.500 4.500-5 7.500-5s5.500 1.500 7.500 5c-2 3.500-4.500 5-7.500 5S3 11.500 1 8z" fill="none" stroke="#111" stroke-width="1.500"/><circle cx="8.500" cy="8" r="2.600" fill="none" stroke="#111" stroke-width="1.400"/><path d="M2 1.500l13 13" stroke="#111" stroke-width="1.600"/></svg>
<span class="t" style="left:818px;top:303px;color:#333;">Show/Hide</span>
<div class="a" style="left:0;top:322px;width:874px;height:24px;background:linear-gradient(#f9f9f9,#e6e6e8);border-bottom:2px solid #c5c5c5;overflow:hidden">
<div class="hd" style="left:0px;width:39px;padding-left:14px">#</div>
<div class="hd" style="left:39px;width:100px;padding-left:5px">Line Ref.</div>
<div class="hd" style="left:139px;width:50px;padding-left:5px">Seq. No.</div>
<div class="hd" style="left:189px;width:50px;padding-left:4px">LS</div>
<div class="hd" style="left:239px;width:50px;padding-left:5px">Status</div>
<div class="hd" style="left:289px;width:50px;padding-left:5px">Type</div>
<div class="hd" style="left:339px;width:100px;padding-left:5px">Item</div>
<div class="hd" style="left:439px;width:100px;padding-left:5px">Description</div>
<div class="hd" style="left:539px;width:100px;padding-left:5px">Warehouse</div>
<div class="hd" style="left:639px;width:100px;padding-left:5px">Sales Rep</div>
<div class="hd" style="left:739px;width:100px;padding-left:5px">Total Selling Ex GST</div>
<div class="hd" style="left:839px;width:46px;padding-left:5px">Total Selling</div>
</div>
<div class="a" style="left:0;top:346px;width:874px;height:100px;background:#fff"></div>
</div></div>
<svg style="left:0;top:0;filter:drop-shadow(-1px 2px 2px rgba(0,0,0,.45))" width="1261" height="580" viewBox="0 0 1261 580">
<path d="M988 175.500 L975.500 205.500 L986.300 204 L990.500 275 L1001.500 275 L996.800 203 L1005.200 202.500Z" fill="#f94144"/>
<path d="M573.400 191.500 L606 188.400 L601.800 197.600 L812 280.700 L812 296.500 L597.700 207.300 L594.600 215.800Z" fill="#f94144"/>
</svg>
<div class="a" style="left:806px;top:270px;width:298px;height:85px;border:4px solid #f04346;border-radius:5px;background:#fff;box-shadow:0 1px 4px rgba(0,0,0,.35);text-align:center;font:19.200px/22px 'Liberation Sans',sans-serif;color:#111;padding-top:17px;padding-right:3px">After clicking Assign GRA No,<br>then it shows up the</div>
<div class="a" style="left:902px;top:141px;width:152px;height:32px;border:4px solid #10ab8c;border-radius:7px;background:#fff;box-shadow:0 1px 4px rgba(0,0,0,.4);font:19.200px/25px 'Liberation Sans',sans-serif;color:#111;padding-left:4px;white-space:nowrap">Assign GRA No</div>
</body>
</html>
